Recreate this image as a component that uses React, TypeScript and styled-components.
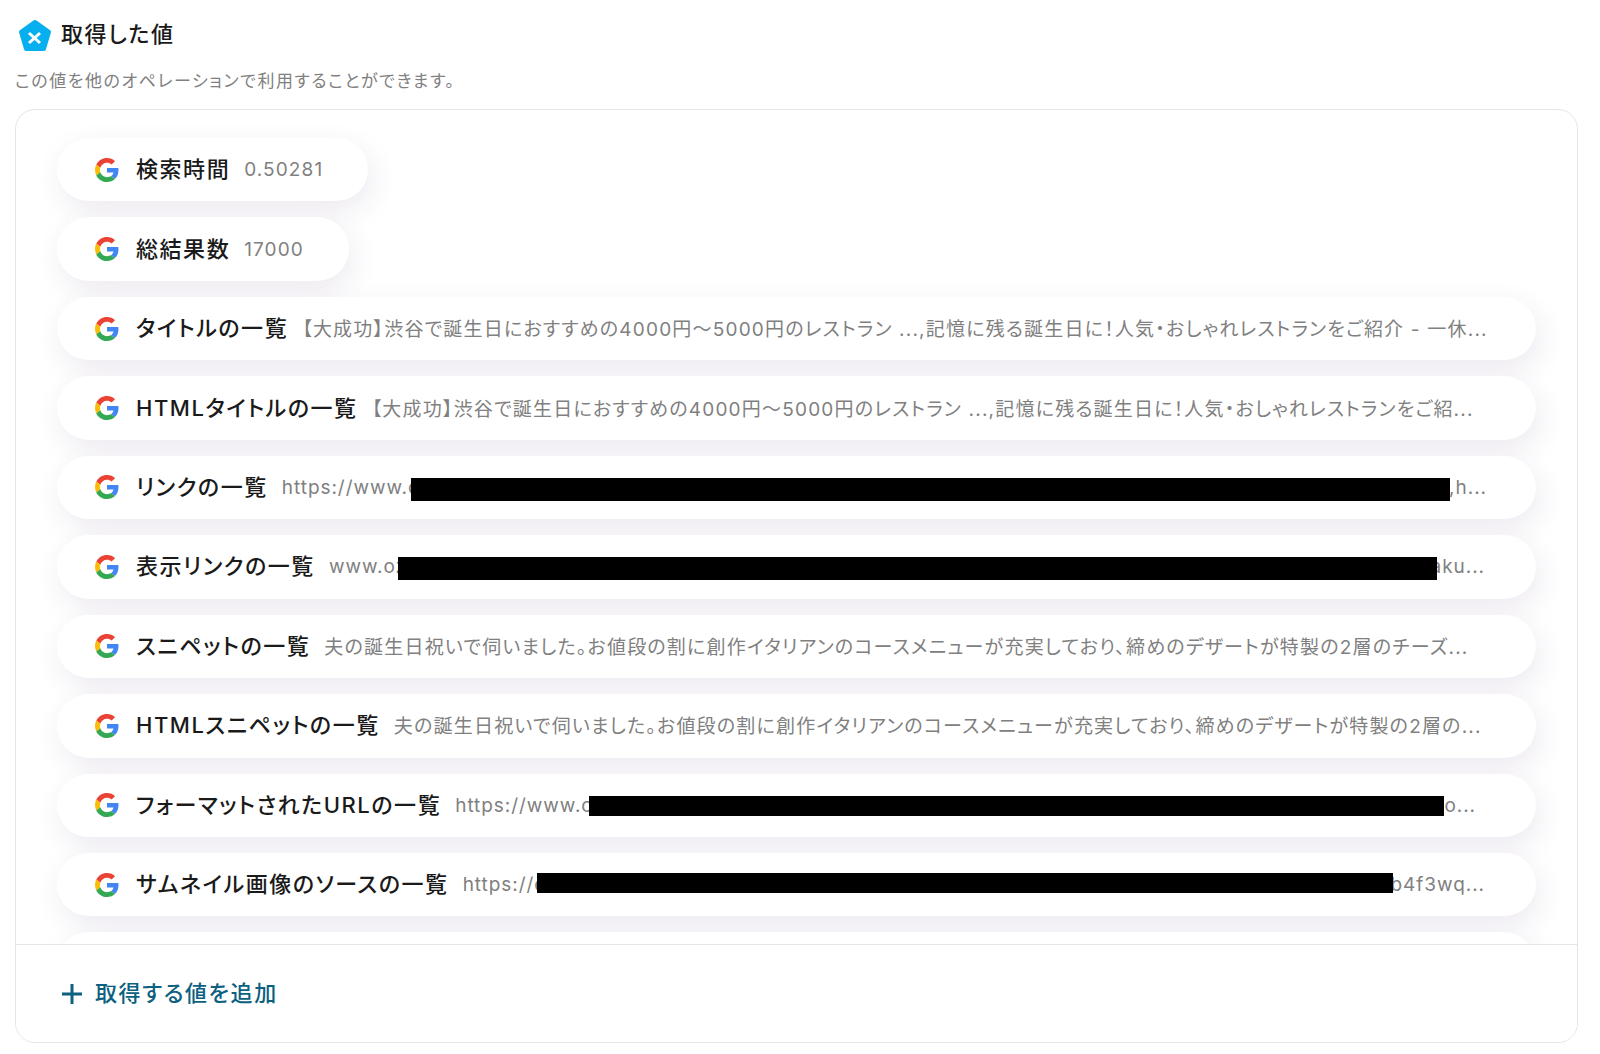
import React from "react";
import styled, { createGlobalStyle } from "styled-components";

const Global = createGlobalStyle`
  html, body { margin: 0; padding: 0; background: #fff; }
  body {
    font-family: Inter, "Noto Sans CJK JP", sans-serif;
    font-feature-settings: "palt";
    overflow: hidden;
  }
`;
const Page = styled.div`
  width: 1600px;
  height: 1054px;
  padding: 19px 22px 11px 15px;
  box-sizing: border-box;
  display: flex;
  flex-direction: column;
`;
const TitleRow = styled.div`
  display: flex;
  align-items: center;
  gap: 9px;
  padding-left: 3px;
  height: 32px;
`;
const Title = styled.h2`
  margin: 0;
  padding-bottom: 6px;
  font-size: 22px;
  font-weight: 500;
  letter-spacing: 1.6px;
  color: #1a1a1a;
`;
const Sub = styled.p`
  margin: 18px 0 0;
  font-size: 17px;
  line-height: 24px;
  letter-spacing: 1.55px;
  color: #808080;
`;
const Card = styled.section`
  margin-top: 16px;
  flex: 1;
  min-height: 0;
  border: 1.5px solid #e6e5e8;
  border-radius: 20px;
  display: flex;
  flex-direction: column;
  overflow: hidden;
`;
const List = styled.div`
  flex: 1;
  min-height: 0;
  overflow: hidden;
  padding: 28px 41px 0 41px;
  display: flex;
  flex-direction: column;
  align-items: flex-start;
  gap: 16px;
`;
const Pill = styled.div<{ $wide?: boolean }>`
  position: relative;
  flex: none;
  height: 63.44px;
  width: ${(p) => (p.$wide ? "100%" : "auto")};
  box-sizing: border-box;
  padding: 0 45px 0 38px;
  border-radius: 32px;
  background: #fff;
  box-shadow: 4px 10px 28px rgba(80, 50, 110, 0.1);
  display: flex;
  align-items: center;
  gap: 14px;
`;
const Label = styled.span`
  flex: none;
  margin-left: 3px;
  padding-bottom: 5px;
  font-size: 22px;
  font-weight: 500;
  letter-spacing: 1.55px;
  color: #1a1a1a;
`;
const Value = styled.span<{ $kind: "cjk" | "url" | "num" }>`
  flex: 1;
  min-width: 0;
  padding-bottom: ${(p) => (p.$kind === "cjk" ? 2 : 0)}px;
  font-size: 19px;
  letter-spacing: ${(p) => (p.$kind === "url" ? 0.95 : p.$kind === "num" ? 1.1 : 1.2)}px;
  color: #808080;
  white-space: nowrap;
  display: flex;
  justify-content: space-between;
`;
const Tail = styled.span<{ $end: number }>`
  margin-right: ${(p) => p.$end}px;
`;
const Redact = styled.i<{ $l: number; $w: number; $t: number; $h: number }>`
  position: absolute;
  left: ${(p) => p.$l}px;
  width: ${(p) => p.$w}px;
  top: ${(p) => p.$t}px;
  height: ${(p) => p.$h}px;
  background: #000;
`;
const Footer = styled.div`
  flex: none;
  height: 98px;
  box-sizing: border-box;
  border-top: 1.5px solid #e6e5e8;
  display: flex;
  align-items: center;
  padding-left: 45px;
  gap: 12px;
  background: #fff;
`;
const AddText = styled.span`
  padding-bottom: 5px;
  font-size: 22px;
  font-weight: 500;
  letter-spacing: 1.6px;
  color: #0c6080;
`;

const GoogleG = () => (
  <svg width="24" height="24" viewBox="0 0 48 48" style={{ flex: "none" }}>
    <path fill="#EA4335" d="M24 9.5c3.54 0 6.71 1.22 9.21 3.6l6.85-6.85C35.9 2.38 30.47 0 24 0 14.62 0 6.51 5.38 2.56 13.22l7.98 6.19C12.43 13.72 17.74 9.5 24 9.5z" />
    <path fill="#4285F4" d="M46.98 24.55c0-1.57-.15-3.09-.38-4.55H24v9.02h12.94c-.58 2.96-2.26 5.48-4.78 7.18l7.73 6c4.51-4.18 7.09-10.36 7.09-17.65z" />
    <path fill="#FBBC05" d="M10.53 28.59c-.48-1.45-.76-2.99-.76-4.59s.27-3.14.76-4.59l-7.98-6.19C.92 16.46 0 20.12 0 24c0 3.88.92 7.54 2.56 10.78l7.97-6.19z" />
    <path fill="#34A853" d="M24 48c6.48 0 11.93-2.13 15.89-5.81l-7.73-6c-2.15 1.45-4.92 2.3-8.16 2.3-6.26 0-11.57-4.22-13.47-9.91l-7.98 6.19C6.51 42.62 14.62 48 24 48z" />
  </svg>
);

const Badge = () => (
  <svg width="34" height="33" viewBox="0 0 34 33" style={{ flex: "none" }}>
    <path fill="#08afee" stroke="#08afee" strokeWidth="4" strokeLinejoin="round" d="M17 3 L31 13 L26 30 L8 30 L3 13 Z" />
    <path stroke="#fff" strokeWidth="3" d="M11 14 L22 24 M22 14 L11 24" />
  </svg>
);

const AddIcon = () => (
  <svg width="22" height="22" viewBox="0 0 22 22" style={{ flex: "none" }}>
    <path stroke="#0c6080" strokeWidth="3" d="M11 1 V21 M1 11 H21" />
  </svg>
);

type Row = {
  label: string;
  value: string;
  kind: "cjk" | "url" | "num";
  tail?: string;
  tailEnd?: number;
  wide?: boolean;
  bar?: [number, number, number, number];
};

const rows: Row[] = [
  { label: "検索時間", value: "0.50281", kind: "num" },
  { label: "総結果数", value: "17000", kind: "num" },
  { label: "タイトルの一覧", kind: "cjk", value: "【大成功】渋谷で誕生日におすすめの4000円〜5000円のレストラン ...,記憶に残る誕生日に！人気・おしゃれレストランをご紹介 - 一休...", wide: true },
  { label: "HTMLタイトルの一覧", kind: "cjk", value: "【大成功】渋谷で誕生日におすすめの4000円〜5000円のレストラン ...,記憶に残る誕生日に！人気・おしゃれレストランをご紹...", wide: true },
  { label: "リンクの一覧", kind: "url", value: "https://www.o", tail: ",h...", tailEnd: 4, wide: true, bar: [354, 1039, 22.5, 22.7] },
  { label: "表示リンクの一覧", kind: "url", value: "www.oz", tail: "aku...", tailEnd: 6, wide: true, bar: [341, 1039, 22, 22.7] },
  { label: "スニペットの一覧", kind: "cjk", value: "夫の誕生日祝いで伺いました。お値段の割に創作イタリアンのコースメニューが充実しており、締めのデザートが特製の2層のチーズ...", wide: true },
  { label: "HTMLスニペットの一覧", kind: "cjk", value: "夫の誕生日祝いで伺いました。お値段の割に創作イタリアンのコースメニューが充実しており、締めのデザートが特製の2層の...", wide: true },
  { label: "フォーマットされたURLの一覧", kind: "url", value: "https://www.o", tail: "o...", tailEnd: 15, wide: true, bar: [531.5, 855.3, 22.5, 20] },
  { label: "サムネイル画像のソースの一覧", kind: "url", value: "https://e", tail: "b4f3wq...", tailEnd: 6, wide: true, bar: [480, 855.6, 20, 20.3] },
  { label: "", value: "", kind: "num", wide: true },
];

export default function App() {
  return (
    <Page>
      <Global />
      <TitleRow>
        <Badge />
        <Title>取得した値</Title>
      </TitleRow>
      <Sub>この値を他のオペレーションで利用することができます。</Sub>
      <Card>
        <List>
          {rows.map((r, i) => (
            <Pill key={i} $wide={r.wide}>
              {r.label && <GoogleG />}
              <Label>{r.label}</Label>
              <Value $kind={r.kind}>
                <span>{r.value}</span>
                {r.tail && <Tail $end={r.tailEnd ?? 0}>{r.tail}</Tail>}
              </Value>
              {r.bar && <Redact $l={r.bar[0]} $w={r.bar[1]} $t={r.bar[2]} $h={r.bar[3]} />}
            </Pill>
          ))}
        </List>
        <Footer>
          <AddIcon />
          <AddText>取得する値を追加</AddText>
        </Footer>
      </Card>
    </Page>
  );
}
